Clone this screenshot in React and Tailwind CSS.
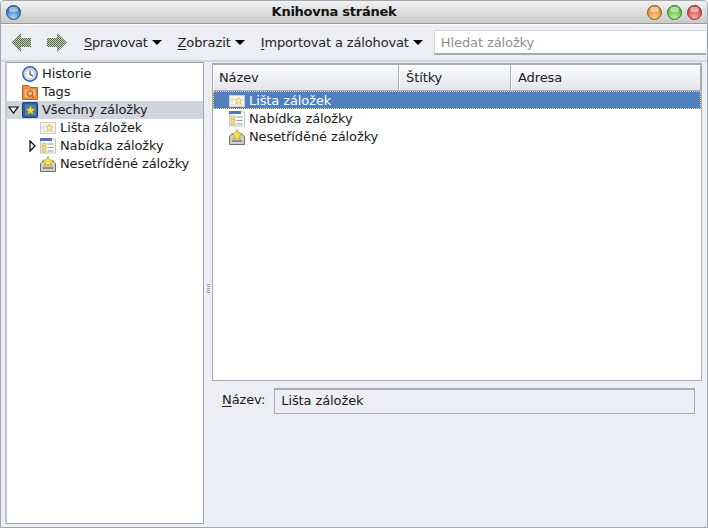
import React from "react";

const font = { fontFamily: '"DejaVu Sans", sans-serif' };

function Orb({ from, to, ring }) {
  return (
    <span
      className="relative block w-[15px] h-[15px] rounded-full border"
      style={{ borderColor: ring, background: `radial-gradient(circle at 50% 85%, ${to} 0%, ${from} 70%)` }}
    >
      <span className="absolute left-[2px] top-[1px] w-[9px] h-[5px] rounded-full bg-white/50" />
    </span>
  );
}

function Arrow({ dir }) {
  const pts = dir === "left" ? "1,10.5 11,1 11,6 21,6 21,15 11,15 11,20" : "21,10.5 11,1 11,6 1,6 1,15 11,15 11,20";
  return (
    <svg width="22" height="22" viewBox="0 0 22 22" className="block shrink-0">
      <defs>
        <pattern id={`dots-${dir}`} width="2" height="2" patternUnits="userSpaceOnUse">
          <rect width="2" height="2" fill="#c9cec4" />
          <rect width="1" height="1" fill="#4c6538" />
          <rect x="1" y="1" width="1" height="1" fill="#54703f" />
        </pattern>
      </defs>
      <polygon points={pts} fill={`url(#dots-${dir})`} />
    </svg>
  );
}

function Clock() {
  return (
    <svg width="16" height="16" viewBox="0 0 16 16" className="shrink-0">
      <circle cx="8" cy="8" r="7.2" fill="#cfdcf0" stroke="#34619f" strokeWidth="1.5" />
      <circle cx="8" cy="8" r="4.8" fill="#f6f5ee" stroke="#9db4d4" strokeWidth=".6" />
      <path d="M8 4.5V8.5L11 10" fill="none" stroke="#444" strokeWidth="1.1" />
    </svg>
  );
}

function TagFolder() {
  return (
    <svg width="16" height="16" viewBox="0 0 16 16" className="shrink-0">
      <path d="M.5 1.5h6l1.5 2h7.5v12H.5z" fill="#ee9148" stroke="#cc5f16" />
      <rect x="2" y="5" width="12" height="9" fill="#f5c08e" stroke="#e07f30" />
      <circle cx="8" cy="9.5" r="2.7" fill="none" stroke="#cc5f16" strokeWidth="1.3" />
      <path d="M10 11.5l2 2" stroke="#cc5f16" strokeWidth="1.3" />
    </svg>
  );
}

function AllBookmarks() {
  return (
    <svg width="16" height="16" viewBox="0 0 16 16" className="shrink-0">
      <rect x=".5" y=".5" width="15" height="15" rx="1" fill="#2f6099" stroke="#1c4373" />
      <rect x="3" y="2.5" width="11" height="11" fill="#4a7fb8" />
      <polygon points="8.5,3.5 9.9,6.7 13.2,7 10.7,9.2 11.4,12.5 8.5,10.8 5.6,12.5 6.3,9.2 3.8,7 7.1,6.7" fill="#f5d93e" stroke="#a88a1a" strokeWidth=".6" />
    </svg>
  );
}

function ToolbarIcon() {
  return (
    <svg width="16" height="16" viewBox="0 0 16 16" className="shrink-0">
      <rect x=".5" y="2.5" width="15" height="11" fill="#f3f3ec" stroke="#cfcfc6" />
      <path d="M2 11.5h12" stroke="#ddd" />
      <polygon points="9.5,4 10.6,6.3 13.2,6.6 11.3,8.3 11.8,10.8 9.5,9.5 7.2,10.8 7.7,8.3 5.8,6.6 8.4,6.3" fill="#fbeea0" stroke="#d6b94a" strokeWidth=".7" />
      <path d="M2 6h2.5M2 8h2.5" stroke="#cfcfc6" />
    </svg>
  );
}

function MenuIcon() {
  return (
    <svg width="16" height="16" viewBox="0 0 16 16" className="shrink-0">
      <rect x=".5" y="1" width="15" height="14" fill="#fafaf6" stroke="#c4c4bc" />
      <rect x="0" y="0" width="12" height="3" fill="#4a78b8" />
      <rect x="2" y="5" width="4" height="2.5" fill="#f2e28a" stroke="#b8a850" strokeWidth=".5" />
      <rect x="2" y="8.5" width="4" height="2.5" fill="#f2e28a" stroke="#b8a850" strokeWidth=".5" />
      <rect x="2" y="12" width="4" height="2" fill="#f2e28a" stroke="#b8a850" strokeWidth=".5" />
      <path d="M7.5 6h6M7.5 9.5h6M7.5 13h6" stroke="#9a9a92" />
    </svg>
  );
}

function UnsortedIcon() {
  return (
    <svg width="16" height="16" viewBox="0 0 16 16" className="shrink-0">
      <path d="M.5 7.5l2-2h11l2 2v8h-15z" fill="#cfcfc8" stroke="#6e6e68" />
      <path d="M3 11h10v2H3z" fill="#8e8e88" />
      <polygon points="8,.5 9.7,4 13.4,4.4 10.6,6.8 11.4,10.4 8,8.6 4.6,10.4 5.4,6.8 2.6,4.4 6.3,4" fill="#f8e25a" stroke="#b0951e" strokeWidth=".7" />
    </svg>
  );
}

function Menu({ first, rest, track }) {
  return (
    <div className={`flex items-center gap-[4px] text-[#222] whitespace-nowrap ${track}`}>
      <span>
        <span className="underline underline-offset-2">{first}</span>
        {rest}
      </span>
      <span className="block w-0 h-0 border-x-[5px] border-x-transparent border-t-[5px] border-t-black" />
    </div>
  );
}

function SideRow({ icon, label, indent, twisty, selected }) {
  return (
    <div className={`flex items-center h-[18px] ${indent} ${selected ? "bg-[#d1d5de]" : ""}`}>
      {twisty === "down" && (
        <svg width="11" height="8" viewBox="0 0 11 8" className="ml-[1px] mr-[3px] shrink-0">
          <polygon points="1,1 10,1 5.5,7" fill="#fff" stroke="#000" strokeWidth="1.2" />
        </svg>
      )}
      {twisty === "right" && (
        <svg width="7" height="12" viewBox="0 0 7 12" className="mr-[4px] shrink-0">
          <polygon points="1,1 6,6 1,11" fill="#fff" stroke="#000" strokeWidth="1.2" />
        </svg>
      )}
      {icon}
      <span className="ml-[4px] whitespace-nowrap">{label}</span>
    </div>
  );
}

function Col({ label, className }) {
  return (
    <div className={`flex items-center pl-[5px] h-[26px] border border-t-white border-l-white border-b-[#a6abb5] border-r-[#a6abb5] bg-gradient-to-b from-[#fafbfc] to-[#e4e6ec] ${className}`}>
      {label}
    </div>
  );
}

function TreeRow({ icon, label, selected }) {
  return (
    <div className={`flex items-center h-[18px] pl-[16px] pt-[2px] ${selected ? "bg-[#5080c0] text-white outline-1 -outline-offset-1 outline-dotted outline-[#f0e49a]" : ""}`}>
      {icon}
      <span className="ml-[4px]">{label}</span>
    </div>
  );
}

export default function App() {
  return (
    <div style={font} className="w-[708px] h-[528px] overflow-hidden flex flex-col bg-[#edeef3] text-[13px] tracking-[-0.1px] text-[#1a1a1a] border border-[#a2a6ae] rounded-t-[4px]">
      <div className="h-[23px] shrink-0 flex items-center justify-between pl-[5px] pr-[5px] bg-gradient-to-b from-[#f2f2f2] to-[#c9c9c9] border-b border-[#9a9a9a]">
        <Orb from="#2f6fc0" to="#a8d4f8" ring="#1e4a80" />
        <span className="font-bold text-[#111] tracking-[-0.25px]">Knihovna stránek</span>
        <div className="flex items-center gap-[5px]">
          <Orb from="#e08a30" to="#fac88a" ring="#8a5418" />
          <Orb from="#5cbc40" to="#b8ecA0" ring="#3a7a28" />
          <Orb from="#d04848" to="#f4a8a8" ring="#883030" />
        </div>
      </div>

      <div className="h-[36px] shrink-0 flex items-center pl-[9px] border-t border-white">
        <Arrow dir="left" />
        <div className="ml-[14px] shrink-0"><Arrow dir="right" /></div>
        <div className="ml-[16px] shrink-0"><Menu first="S" rest="pravovat" track="tracking-[-0.3px]" /></div>
        <div className="ml-[16px] shrink-0"><Menu first="Z" rest="obrazit" track="tracking-[-0.1px]" /></div>
        <div className="ml-[16px] shrink-0"><Menu first="I" rest="mportovat a zálohovat" track="tracking-[-0.15px]" /></div>
        <div className="ml-[11px] w-[272px] h-[25px] shrink-0 flex items-center pl-[6px] pt-[1px] bg-white text-[#8e8e8e] border border-[#d4d6dc] border-b-[#a6abb5] border-b-2 border-r-0">
          Hledat záložky
        </div>
      </div>

      <div className="flex-1 flex min-h-0 pl-[4px] pr-[5px] pb-[3px] border-t-2 border-[#d3d5dc]">
        <div className="w-[199px] shrink-0 bg-white border border-[#a0a4ae] border-l-[#c4c8d0] border-l-2 pt-[2px]">
          <SideRow indent="pl-[15px]" icon={<Clock />} label="Historie" />
          <SideRow indent="pl-[15px]" icon={<TagFolder />} label="Tags" />
          <SideRow indent="pl-0" twisty="down" icon={<AllBookmarks />} label="Všechny záložky" selected />
          <SideRow indent="pl-[33px]" icon={<ToolbarIcon />} label="Lišta záložek" />
          <SideRow indent="pl-[22px]" twisty="right" icon={<MenuIcon />} label="Nabídka záložky" />
          <SideRow indent="pl-[33px]" icon={<UnsortedIcon />} label="Nesetříděné záložky" />
        </div>

        <div className="w-[8px] shrink-0 flex flex-col items-center justify-center gap-[1px] pb-[10px]">
          {[0, 1, 2, 3, 4].map((i) => (
            <span key={i} className="block w-[3px] h-px bg-[#9a9ea8]" />
          ))}
        </div>

        <div className="flex-1 flex flex-col min-w-0">
          <div className="mt-[1px] h-[318px] shrink-0 bg-white border border-[#a6abb5] border-t-2 flex flex-col">
            <div className="flex shrink-0">
              <Col label="Název" className="w-[186px]" />
              <Col label="Štítky" className="w-[112px] pl-[6px]" />
              <Col label="Adresa" className="flex-1 pl-[6px]" />
            </div>
            <TreeRow selected icon={<ToolbarIcon />} label="Lišta záložek" />
            <TreeRow icon={<MenuIcon />} label="Nabídka záložky" />
            <TreeRow icon={<UnsortedIcon />} label="Nesetříděné záložky" />
          </div>
          <div className="mt-[7px] flex items-center pl-[10px] h-[26px]">
            <span className="mb-[2px]">
              <span className="underline underline-offset-2">N</span>ázev:
            </span>
            <div className="ml-[9px] w-[421px] h-[26px] flex items-center pl-[6px] pb-[2px] border border-[#a6abb5] border-t-2 bg-[#edeef3]">
              Lišta záložek
            </div>
          </div>
        </div>
      </div>
    </div>
  );
}
